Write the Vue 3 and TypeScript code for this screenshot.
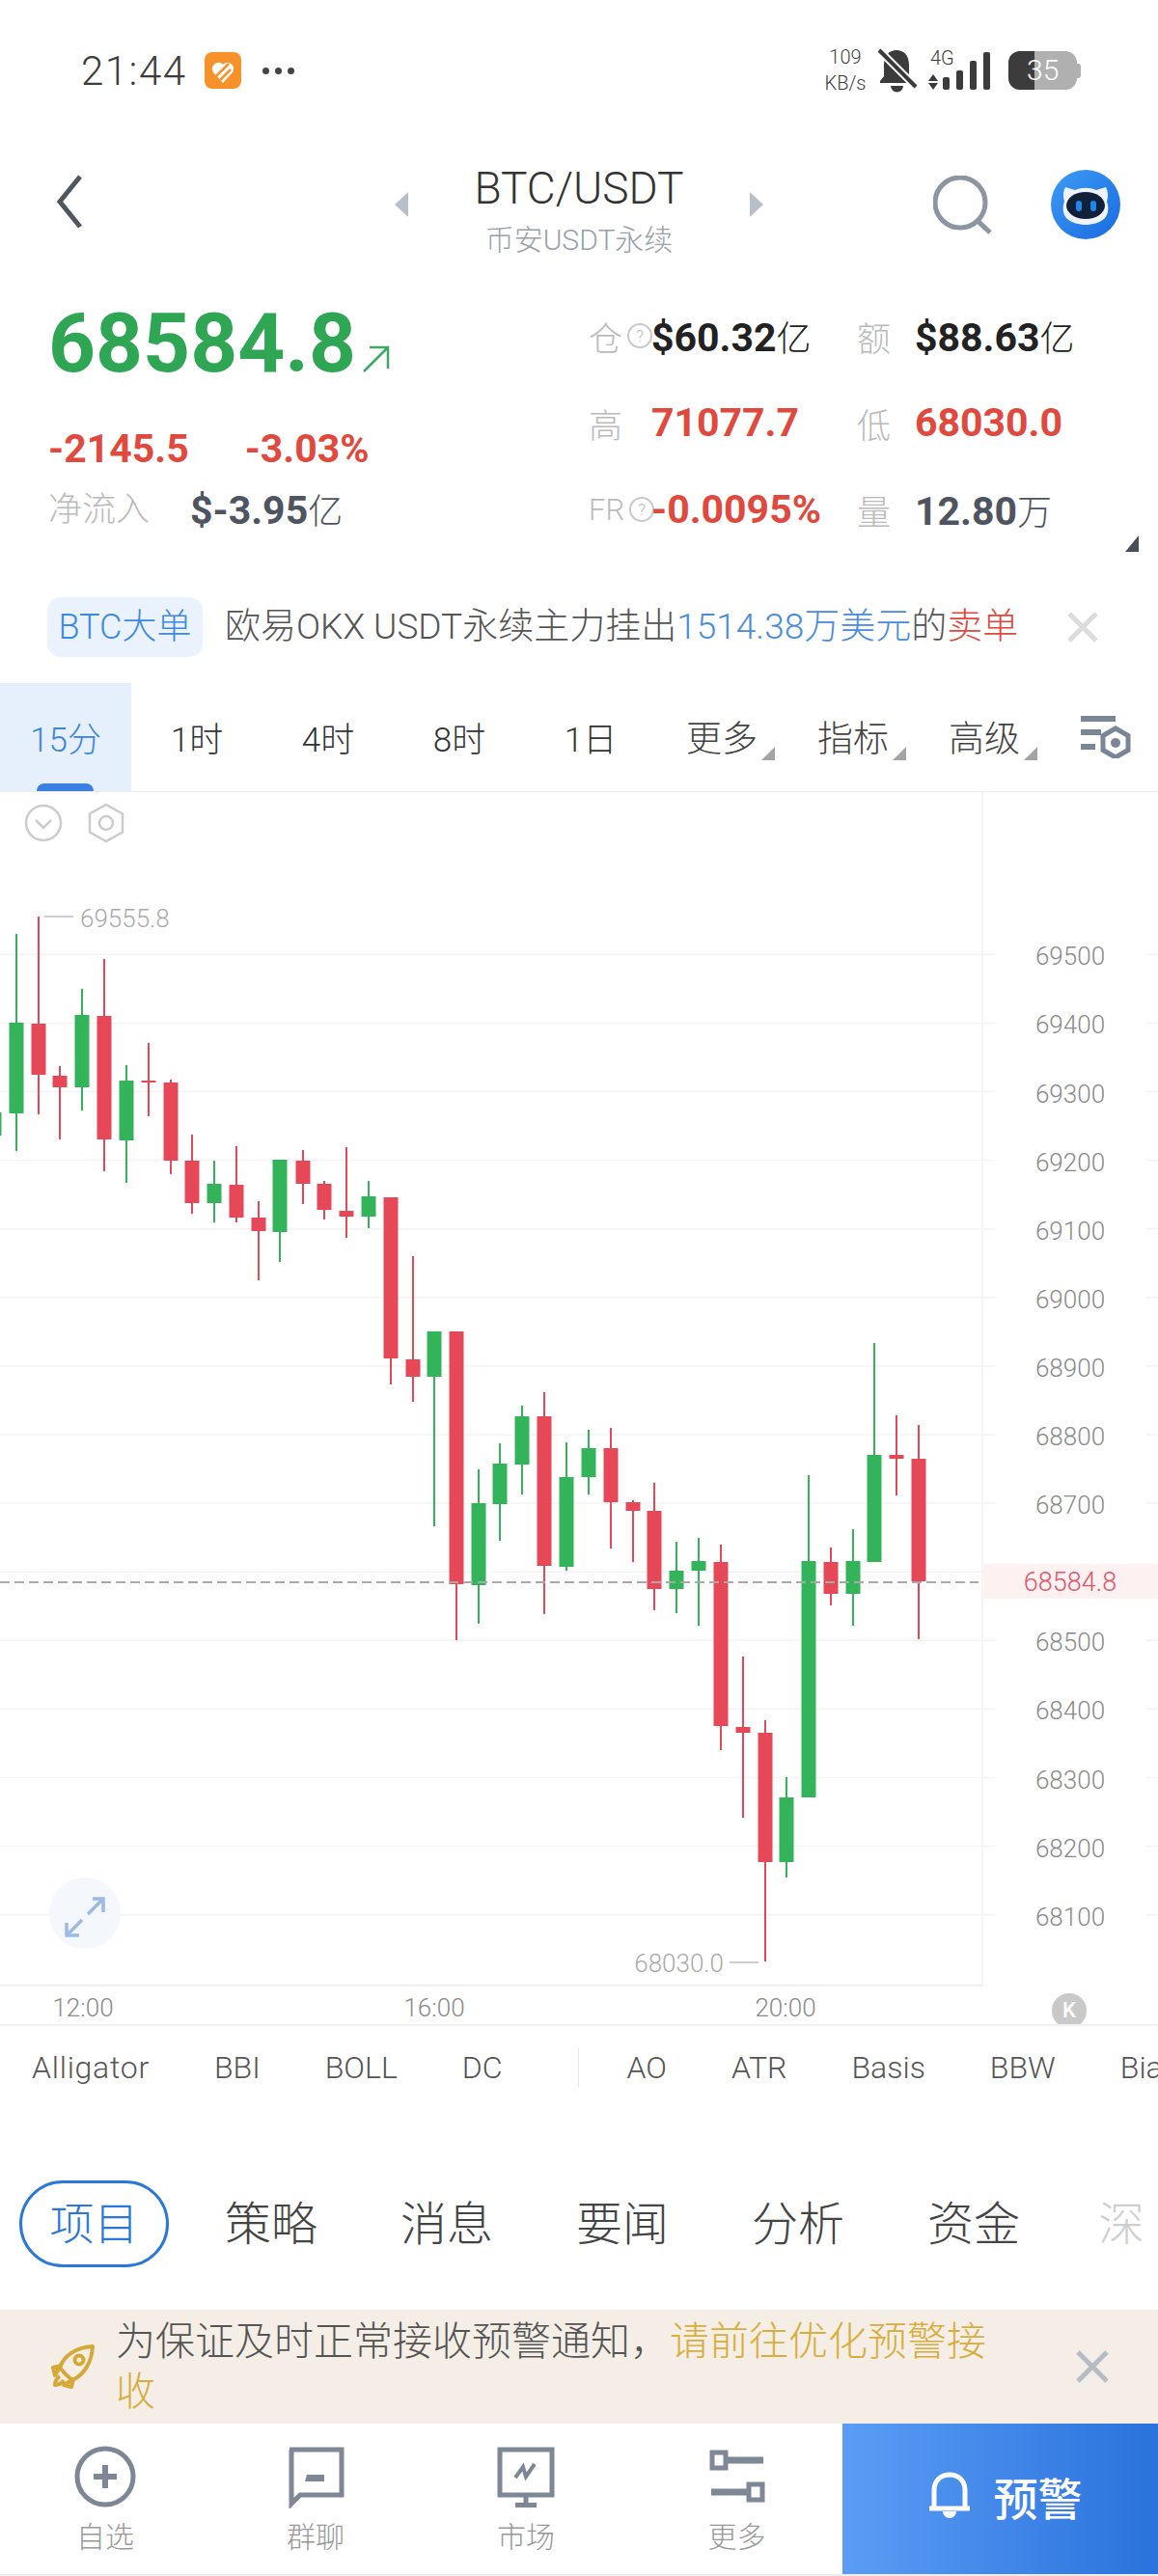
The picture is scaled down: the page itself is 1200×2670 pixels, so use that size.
<script setup lang="ts">
// One candle: centre x, wick top, body top, body bottom, wick bottom, colour.
type Candle = [number, number, number, number, number, 'g' | 'r'];

const candles: Candle[] = [
  [17, 968, 1060, 1154, 1193, 'g'],
  [40, 950, 1061, 1114, 1155, 'r'],
  [62, 1105, 1115, 1127, 1181, 'r'],
  [85, 1025, 1052, 1127, 1151, 'g'],
  [108, 994, 1053, 1181, 1214, 'r'],
  [131, 1104, 1120, 1182, 1226, 'g'],
  [154, 1081, 1120, 1122, 1157, 'r'],
  [177, 1119, 1122, 1203, 1217, 'r'],
  [199, 1176, 1203, 1247, 1258, 'r'],
  [222, 1203, 1227, 1247, 1267, 'g'],
  [245, 1188, 1228, 1262, 1267, 'r'],
  [268, 1245, 1262, 1276, 1327, 'r'],
  [290, 1202, 1202, 1277, 1308, 'g'],
  [314, 1192, 1203, 1227, 1248, 'r'],
  [336, 1224, 1227, 1254, 1264, 'r'],
  [359, 1189, 1255, 1261, 1283, 'r'],
  [382, 1224, 1240, 1261, 1273, 'g'],
  [405, 1241, 1241, 1408, 1435, 'r'],
  [428, 1302, 1409, 1427, 1453, 'r'],
  [450, 1380, 1380, 1427, 1582, 'g'],
  [473, 1380, 1380, 1642, 1700, 'r'],
  [496, 1523, 1558, 1643, 1683, 'g'],
  [518, 1496, 1517, 1559, 1597, 'g'],
  [541, 1457, 1468, 1518, 1549, 'g'],
  [564, 1443, 1468, 1623, 1673, 'r'],
  [587, 1495, 1531, 1624, 1628, 'g'],
  [610, 1482, 1501, 1531, 1549, 'g'],
  [633, 1480, 1501, 1557, 1605, 'r'],
  [656, 1555, 1557, 1566, 1619, 'r'],
  [678, 1537, 1566, 1647, 1669, 'r'],
  [701, 1598, 1628, 1647, 1672, 'g'],
  [724, 1594, 1618, 1628, 1685, 'g'],
  [747, 1601, 1619, 1789, 1814, 'r'],
  [770, 1717, 1790, 1796, 1884, 'r'],
  [793, 1783, 1796, 1930, 2033, 'r'],
  [815, 1842, 1863, 1930, 1946, 'g'],
  [838, 1529, 1618, 1863, 1863, 'g'],
  [861, 1604, 1619, 1652, 1664, 'r'],
  [884, 1585, 1618, 1652, 1685, 'g'],
  [906, 1392, 1508, 1619, 1619, 'g'],
  [929, 1467, 1508, 1512, 1550, 'r'],
  [952, 1477, 1512, 1639, 1699, 'r'],
];

const axis = [
  69500, 69400, 69300, 69200, 69100, 69000, 68900, 68800, 68700, 68600, 68500, 68400, 68300, 68200,
  68100,
].map((price, i) => ({ price, y: 989.3 + i * 71.1 }));

const ranges = ['1时', '4时', '8时', '1日'];
const menus = ['更多', '指标', '高级'];
const sections = ['策略', '消息', '要闻', '分析', '资金'];
const mainStudies = ['Alligator', 'BBI', 'BOLL', 'DC'];
const subStudies = ['AO', 'ATR', 'Basis', 'BBW', 'Bias'];
</script>

<template>
  <div class="app">
    <div class="status">
      <span class="clock">21:44</span>
      <svg class="app-badge" viewBox="0 0 38 38">
        <rect width="38" height="38" rx="8" fill="#f7922a" />
        <path d="M19 32L9 21a6.500 6.500 0 0 1 9-9l1 1 1-1a6.500 6.500 0 0 1 9 9z" fill="#fff" />
        <path d="M12 25l13-13M16 29l11-11" stroke="#f7922a" stroke-width="2.500" />
      </svg>
      <span class="dots"><i></i><i></i><i></i></span>
      <span class="spacer"></span>
      <span class="speed"><b>109</b><b>KB/s</b></span>
      <svg class="bell-off" viewBox="0 0 42 46">
        <path d="M3 34l4-5V17C7 7 13 2 20 2s13 5 13 15v12l5 5v2H3z" fill="#3b3b3b" />
        <path d="M14 39h13a6.500 6.500 0 0 1-13 0z" fill="#3b3b3b" />
        <path d="M2 2l38 38" stroke="#fff" stroke-width="8" />
        <path d="M2 2l38 38" stroke="#3b3b3b" stroke-width="4" />
      </svg>
      <svg class="signal" viewBox="0 0 66 44">
        <text x="2" y="16" class="net">4G</text>
        <path d="M0 33l5-7 5 7zM0 35l5 7 5-7z" fill="#3b3b3b" />
        <rect x="15" y="29" width="7" height="13" rx="2" fill="#3b3b3b" />
        <rect x="29" y="22" width="7" height="20" rx="2" fill="#3b3b3b" />
        <rect x="43" y="12" width="7" height="30" rx="2" fill="#3b3b3b" />
        <rect x="57" y="3" width="7" height="39" rx="2" fill="#3b3b3b" />
      </svg>
      <span class="battery"><i></i><em>35</em></span>
    </div>

    <div class="header">
      <div class="head-left">
        <svg class="back" viewBox="0 0 28 58">
          <path d="M25 3L4 29l21 26" fill="none" stroke="#4e565f" stroke-width="5" />
        </svg>
      </div>
      <div class="head-mid">
        <i class="tri tri-left"></i>
        <div class="title">
          <div class="pair">BTC/USDT</div>
          <div class="venue">币安USDT永续</div>
        </div>
        <i class="tri tri-right"></i>
      </div>
      <div class="head-right">
        <svg class="search" viewBox="0 0 62 62">
          <circle cx="28" cy="28" r="26" fill="none" stroke="#8b96a2" stroke-width="5" />
          <path d="M46 47l13 12" stroke="#8b96a2" stroke-width="5" />
        </svg>
        <svg class="robot" viewBox="0 0 72 72">
          <defs>
            <linearGradient id="robotBg" x1="0" y1="0" x2="1" y2="1">
              <stop offset="0" stop-color="#3d9bf5" />
              <stop offset="1" stop-color="#1a6be0" />
            </linearGradient>
          </defs>
          <circle cx="36" cy="36" r="36" fill="url(#robotBg)" />
          <path
            d="M15 18l10 3c7-3 15-3 22 0l10-3c3 6 2 11 1 15 2 5 2 12-2 17-5 5-14 7-20 7s-15-2-20-7c-4-5-4-12-2-17-1-4-2-9 1-15z"
            fill="#eef3fb"
          />
          <ellipse cx="36" cy="37" rx="20" ry="14" fill="#12213a" />
          <rect x="26" y="32" width="6" height="11" rx="3" fill="#1f86f0" />
          <rect x="41" y="32" width="6" height="11" rx="3" fill="#1f86f0" />
        </svg>
      </div>
    </div>

    <div class="stats">
      <div class="quote">
        <div class="last">
          <span>68584.8</span>
          <svg class="up" viewBox="0 0 30 30">
            <path d="M2 28L27 3M8 3h19v22" fill="none" stroke="#3fa763" stroke-width="2.500" />
          </svg>
        </div>
        <div class="change"><span>-2145.5</span><span>-3.03%</span></div>
        <div class="flow"><span class="lbl">净流入</span><span class="val dim">$-3.95<small>亿</small></span></div>
      </div>
      <div class="figures">
        <span class="lbl">仓<i class="q">?</i></span><span class="val dark">$60.32<small>亿</small></span>
        <span class="lbl">额</span><span class="val dark">$88.63<small>亿</small></span>
        <span class="lbl">高</span><span class="val red">71077.7</span>
        <span class="lbl">低</span><span class="val red">68030.0</span>
        <span class="lbl fr">FR<i class="q">?</i></span><span class="val red">-0.0095%</span>
        <span class="lbl">量</span><span class="val dim">12.80<small>万</small></span>
      </div>
      <i class="corner"></i>
    </div>

    <div class="alert">
      <span class="tag">BTC大单</span>
      <span class="msg">欧易OKX USDT永续主力挂出<em class="blue">1514.38万美元</em>的<em class="sell">卖单</em></span>
      <svg class="alert-x" viewBox="0 0 32 32">
        <path d="M2 2l28 28M30 2L2 30" stroke="#dcdcdc" stroke-width="5" />
      </svg>
    </div>

    <div class="periods">
      <div class="period active">15分<i></i></div>
      <div v-for="r in ranges" :key="r" class="period">{{ r }}</div>
      <div v-for="m in menus" :key="m" class="period menu">{{ m }}<i class="mark"></i></div>
      <div class="period">
        <svg class="config" viewBox="0 0 52 44">
          <path d="M0 3h36M0 17h21M0 32h15" stroke="#7a8697" stroke-width="6" />
          <path d="M36 13l13 7.500v15L36 43l-13-7.500v-15z" fill="none" stroke="#7a8697" stroke-width="5" />
          <circle cx="36" cy="28" r="5" fill="#7a8697" />
        </svg>
      </div>
    </div>

    <svg class="chart" viewBox="0 821 1200 1238">
      <line x1="1018" y1="821" x2="1018" y2="2059" class="edge" />
      <line x1="0" y1="2058" x2="1018" y2="2058" class="edge thick" />

      <g v-for="a in axis" :key="a.price">
        <line x1="0" :y1="a.y" x2="1032" :y2="a.y" class="grid" />
        <line x1="1188" :y1="a.y" x2="1200" :y2="a.y" class="grid" />
        <text v-if="a.price !== 68600" x="1109" :y="a.y + 11" text-anchor="middle" class="tick">{{ a.price }}</text>
      </g>

      <circle cx="45" cy="853" r="18" class="tool" />
      <path d="M37 850l8 8 8-8" class="tool" />
      <path d="M110 834l17 9.500v19L110 872l-17-9.500v-19z" class="tool" />
      <circle cx="110" cy="853" r="7" class="tool" />

      <line x1="0" y1="1153" x2="0" y2="1177" stroke="#34b45a" stroke-width="3" />
      <g v-for="c in candles" :key="c[0]" :fill="c[5] === 'g' ? '#34b45a' : '#e64858'">
        <rect :x="c[0] - 1" :y="c[1]" width="2" :height="c[4] - c[1]" />
        <rect :x="c[0] - 7.500" :y="c[2]" width="15" :height="c[3] - c[2]" />
      </g>

      <line x1="0" y1="1640" x2="1014" y2="1640" class="last-line" />
      <rect x="1018" y="1621" width="182" height="36" fill="#fdf1f1" />
      <text x="1109" y="1649" text-anchor="middle" class="last-tick">68584.8</text>

      <line x1="46" y1="950" x2="76" y2="950" class="extreme" />
      <text x="83" y="961" class="ext-text">69555.8</text>
      <line x1="756" y1="2034" x2="786" y2="2034" class="extreme" />
      <text x="750" y="2044" text-anchor="end" class="ext-text">68030.0</text>

      <circle cx="88" cy="1983" r="37" fill="#f4f8fd" />
      <path d="M91 1984l15-15M96 1968h11v14M85 1990l-15 15M69 1993v13h13" fill="none" stroke="#9db9e6" stroke-width="3.500" />
    </svg>

    <div class="times">
      <span>12:00</span><span>16:00</span><span>20:00</span>
      <b class="k">K</b>
    </div>

    <div class="studies">
      <span v-for="s in mainStudies" :key="s">{{ s }}</span>
      <i class="divider"></i>
      <span v-for="s in subStudies" :key="s">{{ s }}</span>
    </div>

    <div class="sections">
      <span class="section current">项目</span>
      <span v-for="s in sections" :key="s" class="section">{{ s }}</span>
      <span class="section faded">深</span>
    </div>

    <div class="notice">
      <svg class="rocket" viewBox="0 0 46 46">
        <g fill="none" stroke="#d6a838" stroke-width="4" stroke-linejoin="round">
          <path d="M16 31L10 24C14 12 26 3 44 2c-1 18-10 30-21 35z" />
          <circle cx="30" cy="16" r="4.500" />
          <path d="M11 22l-8 2 2 8zM24 36l-2 8-8-2zM10 33c-3 2-5 6-5 9 4 0 7-2 9-5" />
        </g>
      </svg>
      <p>为保证及时正常接收预警通知，<em>请前往优化预警接收</em></p>
      <svg class="notice-x" viewBox="0 0 34 34">
        <path d="M2 2l30 30M32 2L2 32" stroke="#b5bcc6" stroke-width="5" />
      </svg>
    </div>

    <div class="nav">
      <div class="nav-item">
        <svg viewBox="0 0 66 66">
          <circle cx="33" cy="33" r="29" fill="none" stroke="#7d8796" stroke-width="5" />
          <path d="M33 21v24M21 33h24" stroke="#7d8796" stroke-width="6" />
        </svg>
        <span>自选</span>
      </div>
      <div class="nav-item">
        <svg viewBox="0 0 66 66">
          <path d="M6 5h54v47H17l-9 9V5z" fill="none" stroke="#7d8796" stroke-width="5" />
          <path d="M24 31h18v7H22z" fill="#7d8796" />
        </svg>
        <span>群聊</span>
      </div>
      <div class="nav-item">
        <svg viewBox="0 0 66 66">
          <path d="M6 5h54v47H6z" fill="none" stroke="#7d8796" stroke-width="5" />
          <path d="M22 34l8-11 3 10 9-13" fill="none" stroke="#7d8796" stroke-width="4" />
          <path d="M33 52v9" stroke="#7d8796" stroke-width="5" />
          <path d="M22 60h22v5H22z" fill="#7d8796" />
        </svg>
        <span>市场</span>
      </div>
      <div class="nav-item">
        <svg viewBox="0 0 66 66">
          <path d="M7 8h14v16H7zM45 41h14v16H45z" fill="none" stroke="#7d8796" stroke-width="5" />
          <path d="M21 16h39M6 49h39" stroke="#7d8796" stroke-width="7" />
        </svg>
        <span>更多</span>
      </div>
      <div class="alarm">
        <svg viewBox="0 0 44 50">
          <path d="M6 36V19C6 9 13 3 22 3s16 6 16 16v17" fill="none" stroke="#fff" stroke-width="5" />
          <path d="M1 38h42" stroke="#fff" stroke-width="5" />
          <path d="M15 41h14a7 7 0 0 1-14 0z" fill="#fff" />
        </svg>
        <span>预警</span>
      </div>
    </div>
  </div>
</template>

<style>
html,
body {
  margin: 0;
  background: #fff;
}
</style>

<style scoped>
.app {
  width: 1200px;
  height: 2670px;
  display: flex;
  flex-direction: column;
  overflow: hidden;
  position: relative;
  background: #fff;
  color: #444;
  font-family: Roboto, "Noto Sans CJK SC", sans-serif;
  font-weight: 300;
}
i,
em {
  font-style: normal;
}

/* status bar */
.status {
  height: 120px;
  flex: none;
  display: flex;
  align-items: center;
  padding: 26px 84px 0 84px;
  box-sizing: border-box;
}
.clock {
  font-size: 42px;
  letter-spacing: 1.5px;
  width: 128px;
  color: #3d3d3d;
}
.app-badge {
  width: 38px;
  height: 38px;
}
.dots {
  display: flex;
  gap: 6px;
  margin-left: 22px;
}
.dots i {
  width: 7px;
  height: 7px;
  border-radius: 50%;
  background: #444;
}
.spacer {
  flex: 1;
}
.speed {
  display: flex;
  flex-direction: column;
  align-items: center;
  width: 42px;
  font-size: 20px;
  line-height: 27px;
  color: #3d3d3d;
}
.speed b {
  font-weight: 300;
}
.bell-off {
  width: 42px;
  height: 46px;
  margin-left: 12px;
}
.signal {
  width: 66px;
  height: 44px;
  margin-left: 11px;
  overflow: visible;
}
.net {
  font-size: 20px;
  fill: #3b3b3b;
}
.battery {
  position: relative;
  width: 71px;
  height: 40px;
  margin-left: 17px;
  border-radius: 12px;
  background: #b0b0b0;
  overflow: visible;
  display: block;
}
.battery::after {
  content: "";
  position: absolute;
  left: 71px;
  top: 13px;
  width: 4px;
  height: 15px;
  border-radius: 0 3px 3px 0;
  background: #b0b0b0;
}
.battery i {
  display: block;
  width: 27px;
  height: 40px;
  border-radius: 12px 0 0 12px;
  background: #3c3c3c;
}
.battery em {
  position: absolute;
  left: 19px;
  top: 0;
  line-height: 40px;
  font-size: 30px;
  color: #fff;
}

/* header */
.header {
  height: 160px;
  flex: none;
  display: grid;
  grid-template-columns: 1fr auto 1fr;
  align-items: center;
  padding: 36px 39px 0 58px;
  box-sizing: border-box;
}
.back {
  width: 28px;
  height: 58px;
  display: block;
  margin-top: -18px;
}
.head-mid {
  display: flex;
  align-items: center;
  gap: 66px;
  margin-left: -19px;
}
.tri {
  width: 0;
  height: 0;
  border-top: 13px solid transparent;
  border-bottom: 13px solid transparent;
  margin-top: -12px;
}
.tri-left {
  border-right: 14px solid #b7bfc8;
}
.tri-right {
  border-left: 14px solid #b7bfc8;
}
.title {
  text-align: center;
  width: 222px;
}
.pair {
  font-size: 46px;
  line-height: 52px;
  color: #333;
}
.venue {
  font-size: 30px;
  line-height: 38px;
  margin-top: 9px;
  color: #98a1ac;
}
.head-right {
  display: flex;
  justify-content: flex-end;
  align-items: center;
  gap: 60px;
  margin-top: -12px;
}
.search {
  width: 62px;
  height: 62px;
  margin-top: 2px;
}
.robot {
  width: 72px;
  height: 72px;
}

/* stats */
.stats {
  height: 330px;
  flex: none;
  position: relative;
  display: flex;
  padding: 23px 0 0 50px;
  box-sizing: border-box;
}
.quote {
  width: 560px;
  flex: none;
}
.last {
  display: flex;
  align-items: flex-end;
  height: 106px;
  line-height: 106px;
  font-size: 85.500px;
  font-weight: 700;
  color: #2ea653;
}
.up {
  width: 30px;
  height: 30px;
  margin: 0 0 22px 6px;
}
.change {
  display: flex;
  gap: 58px;
  margin-top: 30px;
  height: 52px;
  line-height: 52px;
  font-size: 41px;
  font-weight: 700;
  color: #e04a3e;
}
.flow {
  display: flex;
  gap: 42px;
  margin-top: 13px;
  height: 50px;
  line-height: 50px;
}
.figures {
  display: grid;
  grid-template-columns: 65px 213px 60px 1fr;
  grid-auto-rows: 90px;
  align-items: center;
  flex: 1;
}
.lbl {
  font-size: 35px;
  color: #bbb;
  white-space: nowrap;
  display: inline-flex;
  align-items: center;
}
.fr {
  font-size: 31px;
}
.q {
  width: 22px;
  height: 22px;
  border: 2px solid #c8c8c8;
  border-radius: 50%;
  margin-left: 5px;
  font-size: 17px;
  line-height: 22px;
  text-align: center;
  flex: none;
}
.val {
  font-size: 41px;
  font-weight: 700;
  white-space: nowrap;
}
.val small {
  font-size: 36px;
  font-weight: 300;
}
.dark {
  color: #222;
}
.dim {
  color: #4e5560;
}
.red {
  color: #e04a3e;
}
.corner {
  position: absolute;
  right: 20px;
  top: 275px;
  width: 14px;
  height: 17px;
  background: #4a4f57;
  clip-path: polygon(100% 0, 100% 100%, 0 100%);
}

/* alert */
.alert {
  height: 98px;
  flex: none;
  display: flex;
  align-items: flex-start;
  padding: 9px 62px 0 49px;
  box-sizing: border-box;
}
.tag {
  width: 161px;
  height: 62px;
  line-height: 62px;
  text-align: center;
  border-radius: 14px;
  background: #eaf3fd;
  color: #3f8ade;
  font-size: 36px;
}
.msg {
  margin-left: 23px;
  font-size: 37px;
  line-height: 62px;
  color: #555;
  flex: 1;
  white-space: nowrap;
}
.blue {
  color: #4a8ddc;
}
.sell {
  color: #e04a3e;
}
.alert-x {
  width: 32px;
  height: 32px;
  margin-top: 15px;
}

/* period tabs */
.periods {
  height: 113px;
  flex: none;
  display: grid;
  grid-template-columns: repeat(8, 136px) 112px;
  box-sizing: border-box;
  border-bottom: 1px solid #eee;
  font-size: 35px;
  color: #333;
}
.period {
  position: relative;
  display: flex;
  align-items: center;
  justify-content: center;
  padding-bottom: 2px;
}
.active {
  background: #e6f0fc;
  color: #3b86e0;
}
.active i {
  position: absolute;
  left: 38px;
  bottom: 0;
  width: 59px;
  height: 8px;
  border-radius: 8px 8px 0 0;
  background: #3a80e0;
}
.menu {
  font-size: 37px;
  color: #444;
}
.mark {
  position: absolute;
  right: 13px;
  top: 66px;
  width: 14px;
  height: 14px;
  background: #a5a5a5;
  clip-path: polygon(100% 0, 100% 100%, 0 100%);
}
.config {
  width: 52px;
  height: 44px;
  margin-left: 4px;
  margin-top: 2px;
}

/* chart */
.chart {
  width: 1200px;
  height: 1238px;
  flex: none;
  display: block;
}
.edge {
  stroke: #f1f1f1;
  stroke-width: 1.500;
}
.thick {
  stroke-width: 3;
}
.grid {
  stroke: #f3f3f3;
  stroke-width: 1.500;
}
.tick {
  font-size: 26px;
  fill: #8a8a8a;
}
.tool {
  fill: none;
  stroke: #cccccc;
  stroke-width: 2.500;
}
.last-line {
  stroke: #a9a9a9;
  stroke-width: 2;
  stroke-dasharray: 10 5;
}
.last-tick {
  font-size: 27px;
  fill: #e0566a;
}
.extreme {
  stroke: #cfcfcf;
  stroke-width: 2;
}
.ext-text {
  font-size: 26px;
  fill: #aaa;
}

/* time axis */
.times {
  height: 41px;
  flex: none;
  position: relative;
  display: flex;
  gap: 294px;
  padding-left: 51px;
  box-sizing: border-box;
  overflow: hidden;
  border-bottom: 2px solid #f2f2f2;
  font-size: 26px;
  line-height: 44px;
  color: #8a8a8a;
}
.times span {
  width: 70px;
  text-align: center;
}
.k {
  position: absolute;
  left: 1090px;
  top: 7px;
  width: 36px;
  height: 36px;
  border-radius: 50%;
  background: #c9c9c9;
  color: #fff;
  font-size: 22px;
  line-height: 36px;
  text-align: center;
  font-weight: 500;
}

/* studies */
.studies {
  height: 100px;
  flex: none;
  display: flex;
  align-items: flex-start;
  gap: 67px;
  padding: 23px 0 0 33px;
  box-sizing: border-box;
  overflow: hidden;
  white-space: nowrap;
  font-size: 32px;
  line-height: 40px;
  color: #555;
}
.studies span:first-child {
  letter-spacing: 0.75px;
}
.divider {
  flex: none;
  width: 1px;
  height: 40px;
  background: #e5e5e5;
  margin: 0 -17px 0 11px;
}

/* section tabs */
.sections {
  height: 194px;
  flex: none;
  display: flex;
  align-items: flex-start;
  gap: 86px;
  padding: 60px 0 0 20px;
  box-sizing: border-box;
  overflow: hidden;
  white-space: nowrap;
  font-size: 48px;
  line-height: 92px;
  color: #444;
}
.section.current {
  width: 155px;
  height: 90px;
  box-sizing: border-box;
  border: 3px solid #2a78d8;
  border-radius: 45px;
  font-size: 46px;
  line-height: 84px;
  text-align: center;
  color: #2a78d8;
  margin-right: -28px;
}
.faded {
  color: #cfcfcf;
  margin-left: -5px;
}

/* notice */
.notice {
  height: 118px;
  flex: none;
  display: flex;
  align-items: center;
  background: #f4eee6;
  padding: 0 51px 0 52px;
  box-sizing: border-box;
}
.rocket {
  width: 46px;
  height: 46px;
  flex: none;
}
.notice p {
  margin: 0 0 0 22px;
  width: 913px;
  font-size: 41px;
  line-height: 52px;
  color: #555;
}
.notice em {
  color: #d9ad3c;
}
.notice-x {
  width: 34px;
  height: 34px;
  margin-left: 82px;
  flex: none;
}

/* bottom nav */
.nav {
  height: 158px;
  flex: none;
  display: grid;
  grid-template-columns: 218px 218px 218px 219px 1fr;
  box-sizing: border-box;
  border-bottom: 2px solid #eee;
}
.nav-item {
  display: flex;
  flex-direction: column;
  align-items: center;
  padding-top: 22px;
  font-size: 30px;
  line-height: 40px;
  color: #999;
}
.nav-item svg {
  width: 66px;
  height: 66px;
  margin-bottom: 10px;
}
.alarm {
  display: flex;
  align-items: center;
  justify-content: center;
  gap: 24px;
  padding: 0 0 6px 10px;
  background: linear-gradient(90deg, #5b9df5, #2a72dc);
  color: #fff;
  font-size: 46px;
  font-weight: 500;
}
.alarm svg {
  width: 44px;
  height: 50px;
}
</style>
